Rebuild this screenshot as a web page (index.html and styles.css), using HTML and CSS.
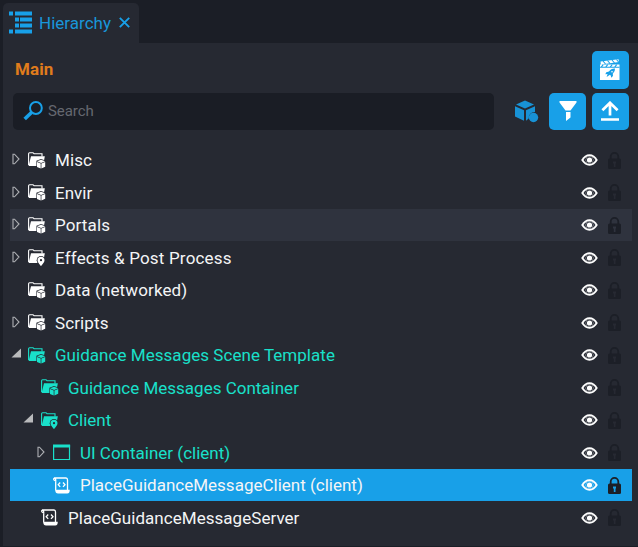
FILE: index.html
```
<!DOCTYPE html>
<html lang="en">
<head>
<meta charset="utf-8">
<title>Hierarchy</title>
<link rel="stylesheet" href="styles.css">
</head>
<body>
<svg class="defs" aria-hidden="true">
  <symbol id="folder" viewBox="0 0 18 17">
    <path d="M.6 13V1.800Q.6.700 1.600.700H5l1 1h8v2.800" fill="none" stroke="currentColor" stroke-width="1.100"/>
    <path d="M3 4.200h13.800L15 14H.6z" fill="currentColor"/>
  </symbol>
  <symbol id="cube-folder" viewBox="0 0 18 17">
    <use href="#folder" width="18" height="17"/>
    <path class="gap" d="M13 7.100l5 1.600v9h-5l-4.600-2V8.800z"/>
    <path d="M9 10l3.700 1.500v5L9 14.900zM17.200 10l-3.800 1.500v5l3.800-1.700zM9 9.300l4.100-1.600 4.100 1.600-4.100 1.600z" fill="currentColor"/>
  </symbol>
  <symbol id="pin-folder" viewBox="0 0 18 17">
    <use href="#folder" width="18" height="17"/>
    <path class="gap" d="M13 6.900a4.300 4.300 0 0 1 4.300 4.300Q17.300 14 14 17.500h-2Q8.700 14 8.700 11.200A4.300 4.300 0 0 1 13 6.900z"/>
    <path d="M13 7.700a3.500 3.500 0 0 1 3.500 3.500C16.500 13.500 13 17 13 17s-3.500-3.500-3.500-5.800A3.500 3.500 0 0 1 13 7.700zm0 2.400a1.100 1.100 0 1 0 0 2.200 1.100 1.100 0 0 0 0-2.200z" fill="currentColor" fill-rule="evenodd"/>
  </symbol>
  <symbol id="window" viewBox="0 0 18 17">
    <path d="M.6 1.500h15.900v14H.6z" fill="none" stroke="currentColor" stroke-width="1.200"/>
    <path d="M0 .500h17.100v3H0z" fill="currentColor"/>
  </symbol>
  <symbol id="script" viewBox="0 0 18 17">
    <path d="M2.700 13V3Q2.700 1 1 1h12q1.500 0 1.500 2v10M1 1Q0 3.500 3 4" fill="none" stroke="currentColor" stroke-width="1.300"/>
    <path d="M4.500 12.800h12.200q.3 3.700-2.500 3.700H5Q2.500 16.500 2.100 13z" fill="currentColor"/>
    <path d="M7.200 5.500L5.200 7.700l2 2.200M10 5.500l2 2.200-2 2.200" fill="none" stroke="currentColor" stroke-width="1.300"/>
  </symbol>
  <symbol id="eye" viewBox="0 0 17 12">
    <path d="M.2 6Q3.500.3 8.500.3T16.800 6Q13.500 11.700 8.500 11.700T.2 6z" fill="currentColor"/>
    <path class="gap" d="M2.500 6Q5 2 8.500 2t6 4q-2.500 4-6 4t-6-4z"/>
    <circle cx="8.500" cy="6" r="3.800" fill="currentColor"/>
    <circle class="gap" cx="8.500" cy="6" r="3.500"/>
    <circle cx="8.500" cy="6" r="2.600" fill="currentColor"/>
  </symbol>
  <symbol id="lock" viewBox="0 0 13 17">
    <path d="M2.700 7V4.700a3.800 3.800 0 0 1 7.600 0V7" fill="none" stroke="currentColor" stroke-width="1.800"/>
    <rect y="6.500" width="13" height="10.500" rx="1.500" fill="currentColor"/>
    <path class="gap" d="M5 9.500h3v2h-.5V15H5.800v-3.500H5z"/>
  </symbol>
  <symbol id="closed" viewBox="0 0 8 12">
    <path d="M1 1.200h1.500L7 6l-4.500 4.800H1z" fill="none" stroke="currentColor" stroke-width="1.100"/>
  </symbol>
  <symbol id="open" viewBox="0 0 10 10">
    <path d="M10 .5V9.500H.5z" fill="currentColor"/>
  </symbol>
</svg>

<div class="window">
  <div class="tabs">
    <div class="tab">
      <svg class="tab-icon" viewBox="0 0 23 23"><path d="M0 .5h4v4H0zM6 .5h17v4H6zM6 6.500h4v4H6zM11 6.500h12v4H11zM6 12.500h4v4H6zM11 12.500h12v4H11zM0 18.500h4v4H0zM6 18.500h17v4H6z" fill="currentColor"/></svg>
      <span class="tab-title">Hierarchy</span>
      <svg class="close" viewBox="0 0 11 11"><path d="M.8.800l9.400 9.400M10.200.8L.8 10.200" stroke="currentColor" stroke-width="1.900"/></svg>
    </div>
  </div>
  <div class="panel">
    <div class="head">
      <span class="scene">Main</span>
      <button class="tool" aria-label="Scenes">
        <svg width="20" height="21" viewBox="0 0 20 21">
          <path d="M.5 2.500L18.500.3l.5 2.800L.8 5.500zM0 5.600h19.500V21H0z" fill="#fff"/>
          <path d="M3 2l2.500 3M7.500 1.500L10 4.500M12 1l2.500 3M16.500.500L19 3.500M1 8.300l2.200-2.600M5.500 8.300l2.200-2.600M10 8.300l2.200-2.600M14.500 8.300l2.200-2.600M0 8.300h19.500" stroke="#18a0e8" stroke-width="1.100"/>
          <path d="M15 9.500q-4-.2-6 3l-2.700.8-1 2 2.300-.2-1 3 3.300-2.300 1 1 .2 2 1.900-1.900-.2-2.200q2.500-2 2.200-5.200z" fill="#18a0e8"/>
          <circle cx="12" cy="12.800" r=".8" fill="#fff"/>
        </svg>
      </button>
    </div>
    <div class="toolbar">
      <div class="search">
        <svg width="20" height="20" viewBox="0 0 20 20" fill="none" stroke="#18a0e8"><circle cx="12.900" cy="7" r="5.900" stroke-width="2"/><path d="M8.500 11.500L1.700 18" stroke-width="3.600"/></svg>
        <span>Search</span>
      </div>
      <svg class="cube" width="24" height="23" viewBox="0 0 24 23">
        <path d="M1 4.600L10 .5l9 4.100-9 4zM0 6.200l9 4v10.500L0 16.500zM20 6.200V12q-6.500.5-6.300 6.500L11 20.700V10.200z" fill="#1892d6"/>
        <circle cx="18.500" cy="17.500" r="4.700" fill="#1892d6"/>
      </svg>
      <button class="tool" aria-label="Filter"><svg class="filter" width="18" height="20" viewBox="0 0 18 20"><path d="M.5 0h17v1.500L11.500 9.500h-5L.5 1.500zM7 11h4.500v5.500L7 20z" fill="#fff"/></svg></button>
      <button class="tool" aria-label="Go up"><svg class="upload" width="18" height="20" viewBox="0 0 18 20" fill="none" stroke="#fff" stroke-width="2.700"><path d="M9 14.500V1.500M1.400 9.300L9 1.800l7.600 7.500M0 18.500h18"/></svg></button>
    </div>
    <div class="tree">
      <div class="row"><svg class="arrow"><use href="#closed"/></svg><svg class="kind"><use href="#cube-folder"/></svg><span class="name">Misc</span><svg class="eye"><use href="#eye"/></svg><svg class="lock"><use href="#lock"/></svg></div>
      <div class="row"><svg class="arrow"><use href="#closed"/></svg><svg class="kind"><use href="#cube-folder"/></svg><span class="name tight">Envir</span><svg class="eye"><use href="#eye"/></svg><svg class="lock"><use href="#lock"/></svg></div>
      <div class="row hover"><svg class="arrow"><use href="#closed"/></svg><svg class="kind"><use href="#cube-folder"/></svg><span class="name">Portals</span><svg class="eye"><use href="#eye"/></svg><svg class="lock"><use href="#lock"/></svg></div>
      <div class="row"><svg class="arrow"><use href="#closed"/></svg><svg class="kind"><use href="#pin-folder"/></svg><span class="name wide">Effects &amp; Post Process</span><svg class="eye"><use href="#eye"/></svg><svg class="lock"><use href="#lock"/></svg></div>
      <div class="row"><svg class="arrow"></svg><svg class="kind"><use href="#cube-folder"/></svg><span class="name">Data (networked)</span><svg class="eye"><use href="#eye"/></svg><svg class="lock"><use href="#lock"/></svg></div>
      <div class="row"><svg class="arrow"><use href="#closed"/></svg><svg class="kind"><use href="#cube-folder"/></svg><span class="name">Scripts</span><svg class="eye"><use href="#eye"/></svg><svg class="lock"><use href="#lock"/></svg></div>
      <div class="row template"><svg class="arrow expanded"><use href="#open"/></svg><svg class="kind"><use href="#cube-folder"/></svg><span class="name root">Guidance Messages Scene Template</span><svg class="eye"><use href="#eye"/></svg><svg class="lock"><use href="#lock"/></svg></div>
      <div class="row template level-1"><svg class="arrow"></svg><svg class="kind"><use href="#cube-folder"/></svg><span class="name tight">Guidance Messages Container</span><svg class="eye"><use href="#eye"/></svg><svg class="lock"><use href="#lock"/></svg></div>
      <div class="row template level-1"><svg class="arrow expanded"><use href="#open"/></svg><svg class="kind"><use href="#pin-folder"/></svg><span class="name tight">Client</span><svg class="eye"><use href="#eye"/></svg><svg class="lock"><use href="#lock"/></svg></div>
      <div class="row template level-2"><svg class="arrow"><use href="#closed"/></svg><svg class="kind"><use href="#window"/></svg><span class="name tight">UI Container (client)</span><svg class="eye"><use href="#eye"/></svg><svg class="lock"><use href="#lock"/></svg></div>
      <div class="row selected level-2"><svg class="arrow"></svg><svg class="kind"><use href="#script"/></svg><span class="name tight">PlaceGuidanceMessageClient (client)</span><svg class="eye"><use href="#eye"/></svg><svg class="lock"><use href="#lock"/></svg></div>
      <div class="row level-1"><svg class="arrow"></svg><svg class="kind"><use href="#script"/></svg><span class="name root">PlaceGuidanceMessageServer</span><svg class="eye"><use href="#eye"/></svg><svg class="lock"><use href="#lock"/></svg></div>
    </div>
  </div>
</div>
</body>
</html>
```
FILE: styles.css
```
* { box-sizing: border-box; }
body { margin: 0; background: #1b1e26; font-family: Roboto, "Liberation Sans", sans-serif; color: #f4f5f6; }
svg { display: block; flex: none; }
.defs { position: absolute; width: 0; height: 0; }
.window { height: 547px; padding: 3px 0 1px 3px; display: flex; flex-direction: column; overflow: hidden; }
.tabs { height: 40px; display: flex; }
.tab { width: 136px; display: flex; align-items: center; padding-left: 6px; background: #262932; border-radius: 5px 5px 0 0; color: #18a0e8; }
.tab-icon { width: 23px; height: 23px; margin-top: -1px; }
.tab-title { width: 72px; margin-left: 7px; font-size: 17px; letter-spacing: .02px; color: #1996da; }
.close { width: 11px; height: 11px; margin: -1px 0 0 8px; }
.panel { flex: 1; background: #262932; padding: 7px 6px 0 7px; }
.head { display: flex; align-items: center; justify-content: space-between; height: 38px; padding: 0 3px 0 5px; }
.scene { color: #e07c1c; font-size: 17px; font-weight: 700; letter-spacing: .1px; }
.tool { width: 37px; height: 37px; padding: 0; border: 0; border-radius: 5px; background: #18a0e8; display: flex; align-items: center; justify-content: center; }
.head .tool { height: 38px; margin-top: 1px; }
.head .tool svg { margin: 0 2px 0 0; }
.filter, .upload { margin-bottom: 2px; }
.upload { margin-right: 1px; }
.toolbar { display: flex; align-items: center; height: 37px; margin-top: 5px; padding: 0 3px; }
.search { width: 481px; height: 37px; border-radius: 5px; background: #1a1d25; display: flex; align-items: center; gap: 5px; padding: 0 0 2px 10px; color: #656870; font-size: 15px; letter-spacing: -.05px; }
.cube { margin: 0 10px 0 21px; }
.toolbar .tool + .tool { margin-left: 6px; }
.tree { display: grid; grid-auto-rows: 32px; row-gap: .5px; margin-top: 14px; }
.row { --surface: #262932; display: flex; align-items: center; background: var(--surface); padding-right: 11px; }
.gap { fill: var(--surface); }
.arrow { width: 8px; height: 12px; margin: 0 8px 2px 2px; color: #aeb0b4; }
.arrow.expanded { width: 10px; height: 10px; margin: 0 7px 4px 1px; color: #b9babc; }
.kind { width: 18px; height: 17px; color: #fff; }
.name { flex: 1; margin-left: 9px; font-size: 17px; line-height: 32px; letter-spacing: .12px; white-space: nowrap; }
.tight { letter-spacing: 0; }
.root { letter-spacing: .04px; }
.wide { letter-spacing: .18px; }
.eye { width: 17px; height: 12px; color: #fff; }
.lock { width: 13px; height: 17px; margin-left: 10px; color: #1c1f27; }
.level-1 { padding-left: 13px; }
.level-2 { padding-left: 25px; }
.level-1 .expanded { margin-left: 0; margin-right: 8px; }
.hover { --surface: #2f333e; }
.selected { --surface: #18a0e8; }
.template .kind, .template .name { color: #19e0ca; }
```
